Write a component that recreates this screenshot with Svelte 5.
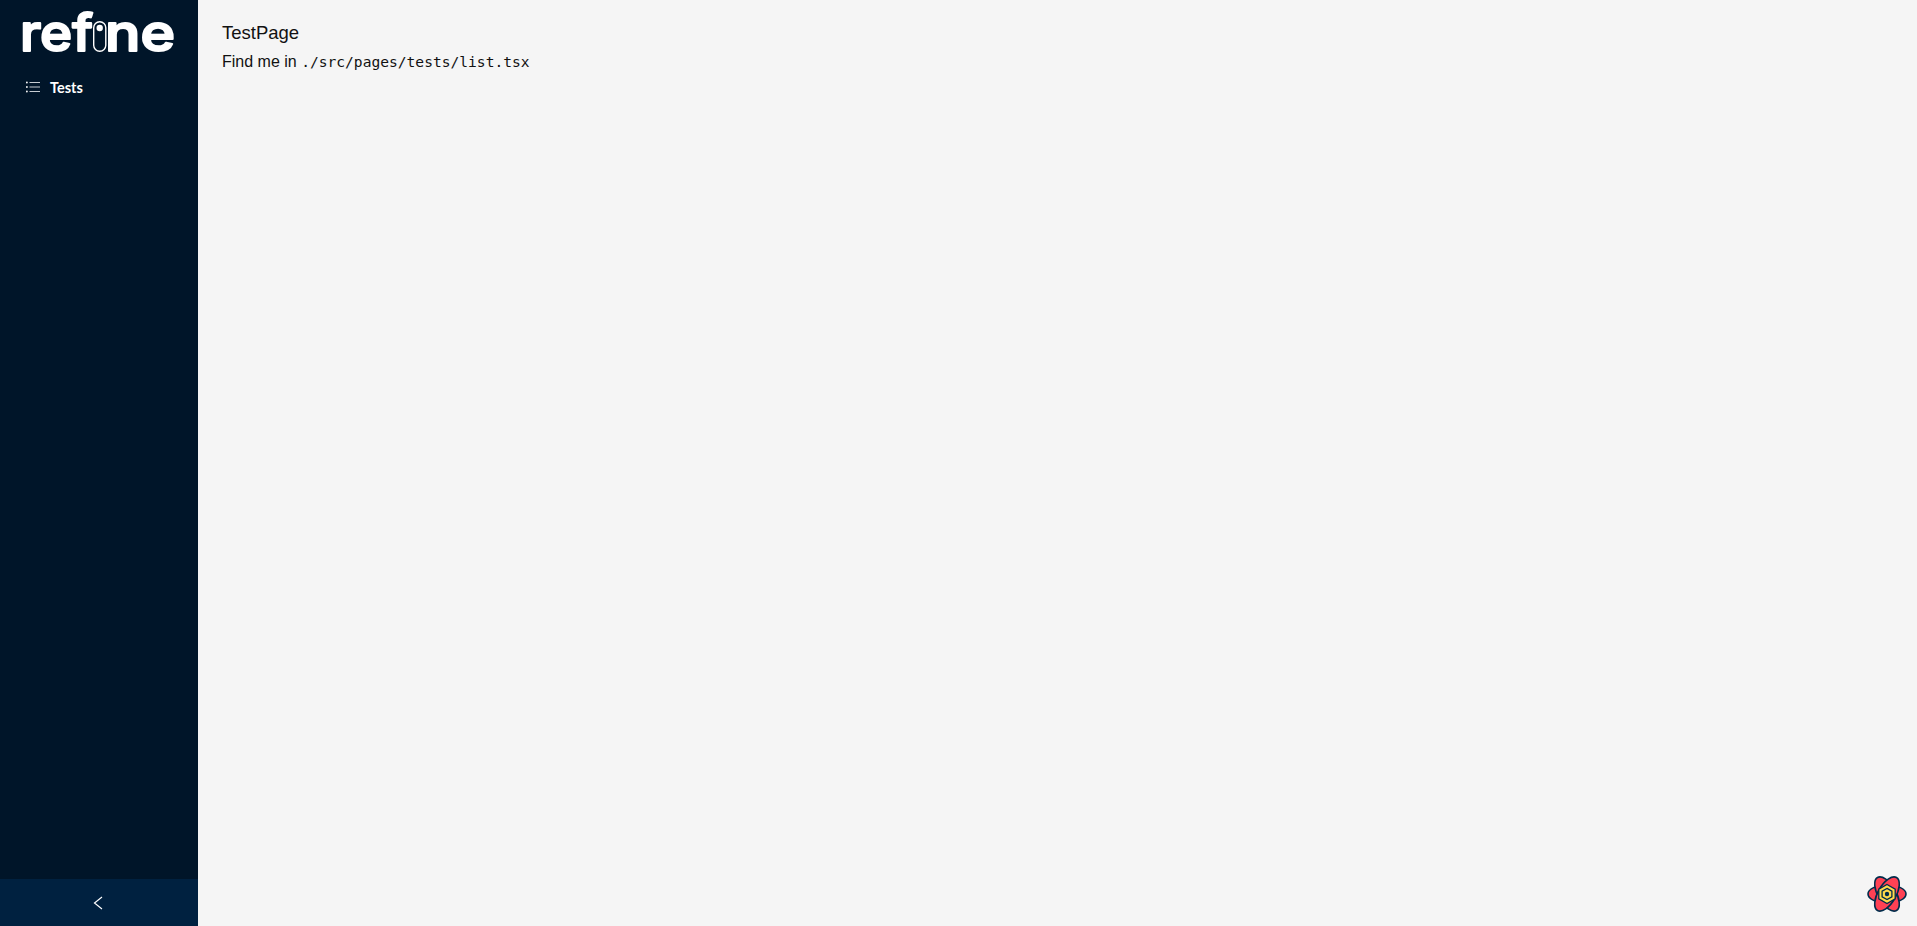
<script lang="ts">
	const menu = [{ key: 'tests', label: 'Tests' }];
</script>

<div class="layout">
	<aside class="sider">
		<div class="logo">
			<svg viewBox="0 0 198 64" width="198" height="64" role="img" aria-label="refine">
				<text class="logo-text" y="51" x="20" textLength="73" lengthAdjust="spacingAndGlyphs">ref</text>
				<text class="logo-text" y="51" x="105" textLength="70" lengthAdjust="spacingAndGlyphs">ne</text>
				<rect x="93.7" y="21.7" width="12.1" height="29.6" rx="6" fill="#001529" stroke="#fff" stroke-width="1.4" />
				<circle cx="99.7" cy="28" r="3.2" fill="#fff" />
			</svg>
		</div>
		<ul class="menu">
			{#each menu as item (item.key)}
				<li class="menu-item">
					<svg class="menu-icon" viewBox="0 0 14 12" width="14" height="12" aria-hidden="true">
						<g fill="none" stroke="#c6ccd2" stroke-width="1">
							<path d="M3.5 1.5H14M3.5 6H14M3.5 10.5H14" />
						</g>
						<g fill="#fff">
							<circle cx="0.9" cy="1.5" r="0.9" />
							<circle cx="0.9" cy="6" r="0.9" />
							<circle cx="0.9" cy="10.5" r="0.9" />
						</g>
					</svg>
					<span>{item.label}</span>
				</li>
			{/each}
		</ul>
		<button class="collapse" aria-label="Collapse menu">
			<svg viewBox="0 0 10 14" width="10" height="14" aria-hidden="true">
				<path d="M9 1 1.5 7 9 13" fill="none" stroke="#fff" stroke-width="1.2" />
			</svg>
		</button>
	</aside>

	<main class="content">
		<div class="title">TestPage</div>
		<p class="hint">Find me in <code>./src/pages/tests/list.tsx</code></p>
	</main>

	<button class="devtools" aria-label="Open React Query Devtools">
		<svg viewBox="0 0 40 40" width="40" height="40" aria-hidden="true">
			<g fill="#ff4154" stroke="#002c4b" stroke-width="1.6">
				<ellipse cx="20" cy="20" rx="19" ry="9" />
				<ellipse cx="20" cy="20" rx="19" ry="9" transform="rotate(60 20 20)" />
				<ellipse cx="20" cy="20" rx="19" ry="9" transform="rotate(120 20 20)" />
			</g>
			<path d="M20 10.5 28.2 15.2v9.6L20 29.5l-8.2-4.7v-9.6z" fill="#ffd94c" stroke="#002c4b" stroke-width="1.3" />
			<path d="M20 14.4 24.9 17.2v5.6L20 25.6l-4.9-2.8v-5.6z" fill="none" stroke="#002c4b" stroke-width="1.3" />
			<circle cx="20" cy="20" r="2.2" fill="#002c4b" />
		</svg>
	</button>
</div>

<style>
	:global(body) {
		margin: 0;
		background: #f5f5f5;
	}

	.layout {
		display: flex;
		height: 926px;
		overflow: hidden;
		position: relative;
	}

	.sider {
		width: 198px;
		flex: none;
		display: flex;
		flex-direction: column;
		background: #001529;
	}

	.logo {
		height: 64px;
	}

	.logo svg {
		display: block;
		overflow: visible;
	}

	.logo-text {
		font-family: 'Inter', sans-serif;
		font-size: 52px;
		font-weight: 500;
		fill: #fff;
		stroke: #fff;
		stroke-width: 2.2px;
		stroke-linejoin: round;
	}

	.menu {
		list-style: none;
		margin: 3px 0 0;
		padding: 0;
		flex: 1;
	}

	.menu-item {
		display: flex;
		align-items: center;
		gap: 10px;
		height: 40px;
		padding-left: 26px;
		color: #fff;
		font-family: 'Lato', sans-serif;
		font-size: 14.5px;
		font-weight: 700;
	}

	.collapse {
		height: 47px;
		flex: none;
		border: 0;
		padding: 0 2px 0 0;
		background: #002140;
		display: flex;
		align-items: center;
		justify-content: center;
	}

	.content {
		flex: 1;
		padding: 22px 24px;
		color: #111;
		font-family: 'Liberation Sans', sans-serif;
	}

	.title {
		font-size: 18.5px;
		line-height: 22px;
	}

	.hint {
		margin: 7px 0 0;
		font-size: 16px;
		line-height: 22px;
	}

	code {
		font-family: 'DejaVu Sans Mono', monospace;
		font-size: 14.6px;
	}

	.devtools {
		position: absolute;
		right: 10px;
		bottom: 12px;
		width: 40px;
		height: 40px;
		border: 0;
		padding: 0;
		background: none;
	}

	.devtools svg {
		display: block;
	}
</style>
